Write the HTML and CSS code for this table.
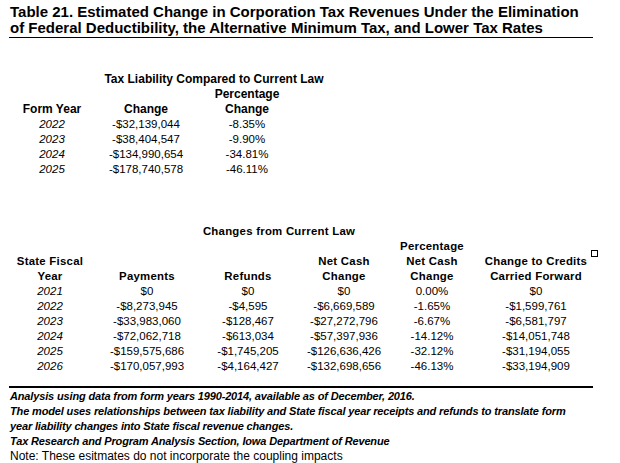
FILE: index.html
```html
<!DOCTYPE html>
<html>
<head>
<meta charset="utf-8">
<link rel="stylesheet" href="styles.css">
</head>
<body>
<div class="page">
  <h1 class="title">Table 21. Estimated Change in Corporation Tax Revenues Under the Elimination<br>of Federal Deductibility, the Alternative Minimum Tax, and Lower Tax Rates</h1>

  <div class="t1">
    <div class="h span1">Tax Liability Compared to Current Law</div>
    <div class="h c3">Percentage</div>
    <div class="h c1">Form Year</div>
    <div class="h c2">Change</div>
    <div class="h c3">Change</div>

    <div class="y c1">2022</div><div class="v c2">-$32,139,044</div><div class="v c3">-8.35%</div>
    <div class="y c1">2023</div><div class="v c2">-$38,404,547</div><div class="v c3">-9.90%</div>
    <div class="y c1">2024</div><div class="v c2">-$134,990,654</div><div class="v c3">-34.81%</div>
    <div class="y c1">2025</div><div class="v c2">-$178,740,578</div><div class="v c3">-46.11%</div>
  </div>

  <div class="t2">
    <div class="h2 span2">Changes from Current Law</div>
    <div class="h2 d5">Percentage</div>

    <div class="h2 d1">State Fiscal</div>
    <div class="h2 d4">Net Cash</div>
    <div class="h2 d5">Net Cash</div>
    <div class="h2 d6 mark-cell">Change to Credits<span class="mark"></span></div>

    <div class="h2 d1">Year</div>
    <div class="h2 d2">Payments</div>
    <div class="h2 d3">Refunds</div>
    <div class="h2 d4">Change</div>
    <div class="h2 d5">Change</div>
    <div class="h2 d6">Carried Forward</div>

    <div class="y d1">2021</div><div class="v d2">$0</div><div class="v d3">$0</div><div class="v d4">$0</div><div class="v d5">0.00%</div><div class="v d6">$0</div>
    <div class="y d1">2022</div><div class="v d2">-$8,273,945</div><div class="v d3">-$4,595</div><div class="v d4">-$6,669,589</div><div class="v d5">-1.65%</div><div class="v d6">-$1,599,761</div>
    <div class="y d1">2023</div><div class="v d2">-$33,983,060</div><div class="v d3">-$128,467</div><div class="v d4">-$27,272,796</div><div class="v d5">-6.67%</div><div class="v d6">-$6,581,797</div>
    <div class="y d1">2024</div><div class="v d2">-$72,062,718</div><div class="v d3">-$613,034</div><div class="v d4">-$57,397,936</div><div class="v d5">-14.12%</div><div class="v d6">-$14,051,748</div>
    <div class="y d1">2025</div><div class="v d2">-$159,575,686</div><div class="v d3">-$1,745,205</div><div class="v d4">-$126,636,426</div><div class="v d5">-32.12%</div><div class="v d6">-$31,194,055</div>
    <div class="y d1">2026</div><div class="v d2">-$170,057,993</div><div class="v d3">-$4,164,427</div><div class="v d4">-$132,698,656</div><div class="v d5">-46.13%</div><div class="v d6">-$33,194,909</div>
  </div>

  <div class="notes">
    <p class="bi">Analysis using data from form years 1990-2014, available as of December, 2016.</p>
    <p class="bi">The model uses relationships between tax liability and State fiscal year receipts and refunds to translate form<br>year liability changes into State fiscal revenue changes.</p>
    <p class="bi">Tax Research and Program Analysis Section, Iowa Department of Revenue</p>
    <p class="plain">Note: These esitmates do not incorporate the coupling impacts</p>
  </div>
</div>
</body>
</html>
```

FILE: styles.css
```css
html, body {
  margin: 0;
  padding: 0;
  background: #fff;
}
body {
  font-family: "Liberation Sans", Arial, sans-serif;
  color: #000;
}
.page {
  width: 620px;
  height: 463px;
  overflow: hidden;
  padding-top: 4px;
  box-sizing: border-box;
}
.title {
  margin: 0 0 0 9px;
  width: 584px;
  padding-left: 1px;
  box-sizing: border-box;
  font-size: 15px;
  line-height: 16px;
  font-weight: bold;
  white-space: nowrap;
  border-bottom: 1px solid #000;
  padding-bottom: 1px;
}
.t1 {
  display: grid;
  grid-template-columns: 84px 104px 98px 38px;
  grid-auto-rows: 15px;
  margin: 33px 0 0 10px;
  align-items: center;
}
.t1 > div { text-align: center; white-space: nowrap; }
.h { font-weight: bold; font-size: 12px; }
.span1 { grid-column: 2 / 5; }
.c1 { grid-column: 1; }
.c2 { grid-column: 2; }
.c3 { grid-column: 3; }
.y { font-style: italic; font-size: 11.5px; }
.v { font-size: 11.5px; }

.t2 {
  display: grid;
  grid-template-columns: 80px 114px 88px 104px 72px 136px;
  grid-auto-rows: 15.1px;
  margin: 47px 0 0 10px;
  align-items: center;
}
.t2 > div { text-align: center; white-space: nowrap; }
.h2 { font-weight: bold; font-size: 11.4px; letter-spacing: 0.25px; }
.span2 { grid-column: 2 / 6; }
.d1 { grid-column: 1; }
.d2 { grid-column: 2; }
.d3 { grid-column: 3; }
.d4 { grid-column: 4; }
.d5 { grid-column: 5; }
.d6 { grid-column: 6; }
.mark-cell { position: relative; }
.mark {
  position: absolute;
  left: 123px;
  top: -5px;
  width: 5px;
  height: 5px;
  border: 1px solid #000;
}

.notes {
  margin: 12px 0 0 9px;
  width: 584px;
  border-top: 2px solid #000;
  padding-top: 1px;
  padding-left: 1px;
  box-sizing: border-box;
}
.notes p {
  margin: 0;
  line-height: 15px;
  white-space: nowrap;
}
.bi { font-weight: bold; font-style: italic; font-size: 11px; letter-spacing: -0.15px; }
.plain { font-size: 12px; }
```
